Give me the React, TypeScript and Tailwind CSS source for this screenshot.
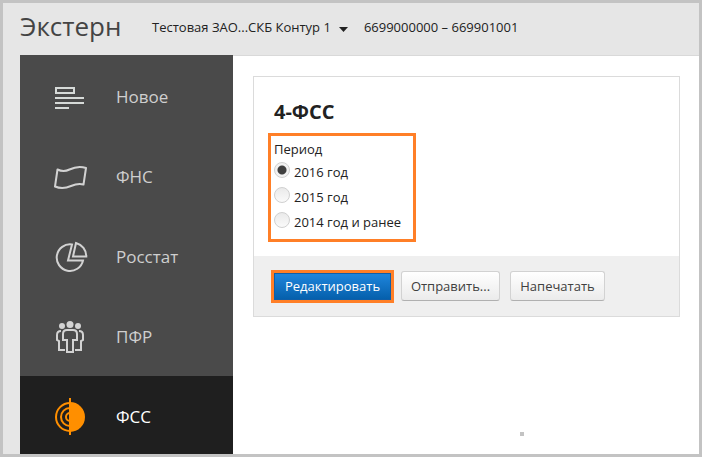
import React, { useState } from 'react';

const NewsIcon = () => (
  <svg width="34" height="32" viewBox="0 0 34 32" fill="none" stroke="#d6dad8" strokeWidth="2">
    <path d="M2 7h18v5H2z" />
    <path d="M1 17h29M1 22h29M1 27h14" />
  </svg>
);

const FlagIcon = () => (
  <svg width="34" height="32" viewBox="0 0 34 32" fill="none" stroke="#d2d2d2" strokeWidth="2" strokeLinejoin="round">
    <path d="M3.500 8.500c4 2 8 2 12 0S25 4.500 32 7l-2.500 16.500c-5-1.500-9 0-12.500 1.500S7 28 1 25.500z" />
  </svg>
);

const PieIcon = () => (
  <svg width="34" height="32" viewBox="0 0 34 32" fill="none" stroke="#d2d2d2" strokeWidth="2">
    <path d="M18 3.500A13.300 13.300 0 1 0 29 19.500H14z" />
    <path d="M22 2A13.800 13.800 0 0 1 32.300 15.500H19z" />
  </svg>
);

const PeopleIcon = () => (
  <svg width="34" height="36" viewBox="0 0 34 36" fill="none" stroke="#d2d2d2" strokeWidth="2">
    <circle cx="16" cy="5.500" r="3.500" fill="#d2d2d2" stroke="none" />
    <circle cx="8" cy="7" r="3" fill="#d2d2d2" stroke="none" />
    <circle cx="24" cy="7" r="3" fill="#d2d2d2" stroke="none" />
    <path d="M13 11h6q4 0 4 4v6h-4v12h-6V21H9v-6q0-4 4-4z" />
    <path d="M7 12q-4 0-4 4v5l2 1v9h6" />
    <path d="M25 12q4 0 4 4v5l-2 1v9h-6" />
  </svg>
);

const TargetIcon = () => (
  <svg width="34" height="38" viewBox="0 0 34 38" fill="none" stroke="#ff8f00">
    <path d="M16 4a15 15 0 0 1 0 30z" fill="#ff8f00" stroke="none" />
    <path d="M16 5a14 14 0 0 0 0 28M16 10a9 9 0 0 0 0 18M16 15a4 4 0 0 0 0 8" strokeWidth="2" />
    <path d="M16 0v37" strokeWidth="2" />
  </svg>
);

const menu = [
  { name: 'Новое', icon: NewsIcon },
  { name: 'ФНС', icon: FlagIcon },
  { name: 'Росстат', icon: PieIcon },
  { name: 'ПФР', icon: PeopleIcon },
  { name: 'ФСС', icon: TargetIcon, active: true },
];

const periods = ['2016 год', '2015 год', '2014 год и ранее'];

const Header = () => (
  <header className="flex h-[52px] items-center bg-[#e6e6e6] pl-[17px] text-[13px] text-[#222]">
    <h1 className="w-[132px] pb-1.5 text-[26px] leading-9 text-[#444]">Экстерн</h1>
    <button type="button" className="flex items-center gap-2 whitespace-nowrap pb-0.5">
      Тестовая ЗАО...СКБ Контур 1
      <svg width="9" height="5" viewBox="0 0 9 5" className="mt-0.5" fill="#222">
        <path d="M0 0h9L4.500 5z" />
      </svg>
    </button>
    <span className="ml-4 whitespace-nowrap pb-0.5">6699000000 – 669901001</span>
  </header>
);

const Sidebar = () => (
  <nav className="w-[213px] shrink-0 bg-[#4a4a4a] pt-px">
    {menu.map(({ name, icon: Icon, active }) => (
      <a
        key={name}
        href="#"
        className={`flex h-20 items-center pt-0.5 pl-[34px] text-[17px] last:h-[78px] last:pt-1 ${active ? 'bg-[#1f1f1f] text-white' : 'text-[#cfcfcf]'}`}
      >
        <Icon />
        <span className="ml-7">{name}</span>
      </a>
    ))}
  </nav>
);

const ReportCard = () => {
  const [period, setPeriod] = useState(periods[0]);

  return (
    <section className="border border-[#dbdbdb] text-[13px] text-[#222]">
      <div className="px-5 pt-5 pb-3.5">
        <h2 className="pb-0.5 text-xl leading-[30px] font-bold">4-ФСС</h2>
        <fieldset className="-ml-1.5 mt-1 w-[148px] border-3 border-[#ff7f27] px-[3px] pt-[3px] pb-[5px]">
          <div className="leading-5">Период</div>
          {periods.map((item) => (
            <label key={item} className="flex h-[25px] items-center gap-1 whitespace-nowrap">
              <input
                type="radio"
                name="period"
                checked={period === item}
                onChange={() => setPeriod(item)}
                className="mb-1 size-4 shrink-0 appearance-none rounded-full border border-[#d0d0d0] bg-linear-to-b from-[#eaeaea] to-[#fafafa] checked:bg-[radial-gradient(circle,#404040_4px,#f2f2f2_5px)]"
              />
              <span className="pt-0.5">{item}</span>
            </label>
          ))}
        </fieldset>
      </div>
      <div className="flex h-[60px] items-center bg-[#efefef] pl-[17px] text-[#404040]">
        <div className="border-3 border-[#ff7f27]">
          <button type="button" className="block h-[27px] w-[117px] border border-[#0f5ea8] bg-linear-to-b from-[#1e85dc] to-[#0560ac] pt-0.5 text-white">
            Редактировать
          </button>
        </div>
        <button type="button" className="ml-[7px] h-[30px] w-[99px] rounded-[3px] border border-[#d2d2d2] border-b-[#b0b0b0] bg-linear-to-b from-white to-[#ebebeb] pt-0.5">
          Отправить...
        </button>
        <button type="button" className="ml-2.5 h-[30px] w-[95px] rounded-[3px] border border-[#d2d2d2] border-b-[#b0b0b0] bg-linear-to-b from-white to-[#ebebeb] pt-0.5">
          Напечатать
        </button>
      </div>
    </section>
  );
};

export default function App() {
  return (
    <div className="min-h-screen bg-white pr-px pb-px font-['Open_Sans','Noto_Sans',sans-serif]">
      <div className="border-3 border-[#c3c3c3]">
        <Header />
        <div className="flex bg-[#e6e6e6] pl-[17px]">
          <Sidebar />
          <main className="min-w-0 grow border-t border-[#d9d9d9] bg-white pt-5 pr-[19px] pl-5">
            <ReportCard />
            <div className="mt-[115px] ml-[267px] size-1 bg-[#c3c3c3]" />
          </main>
        </div>
      </div>
    </div>
  );
}
